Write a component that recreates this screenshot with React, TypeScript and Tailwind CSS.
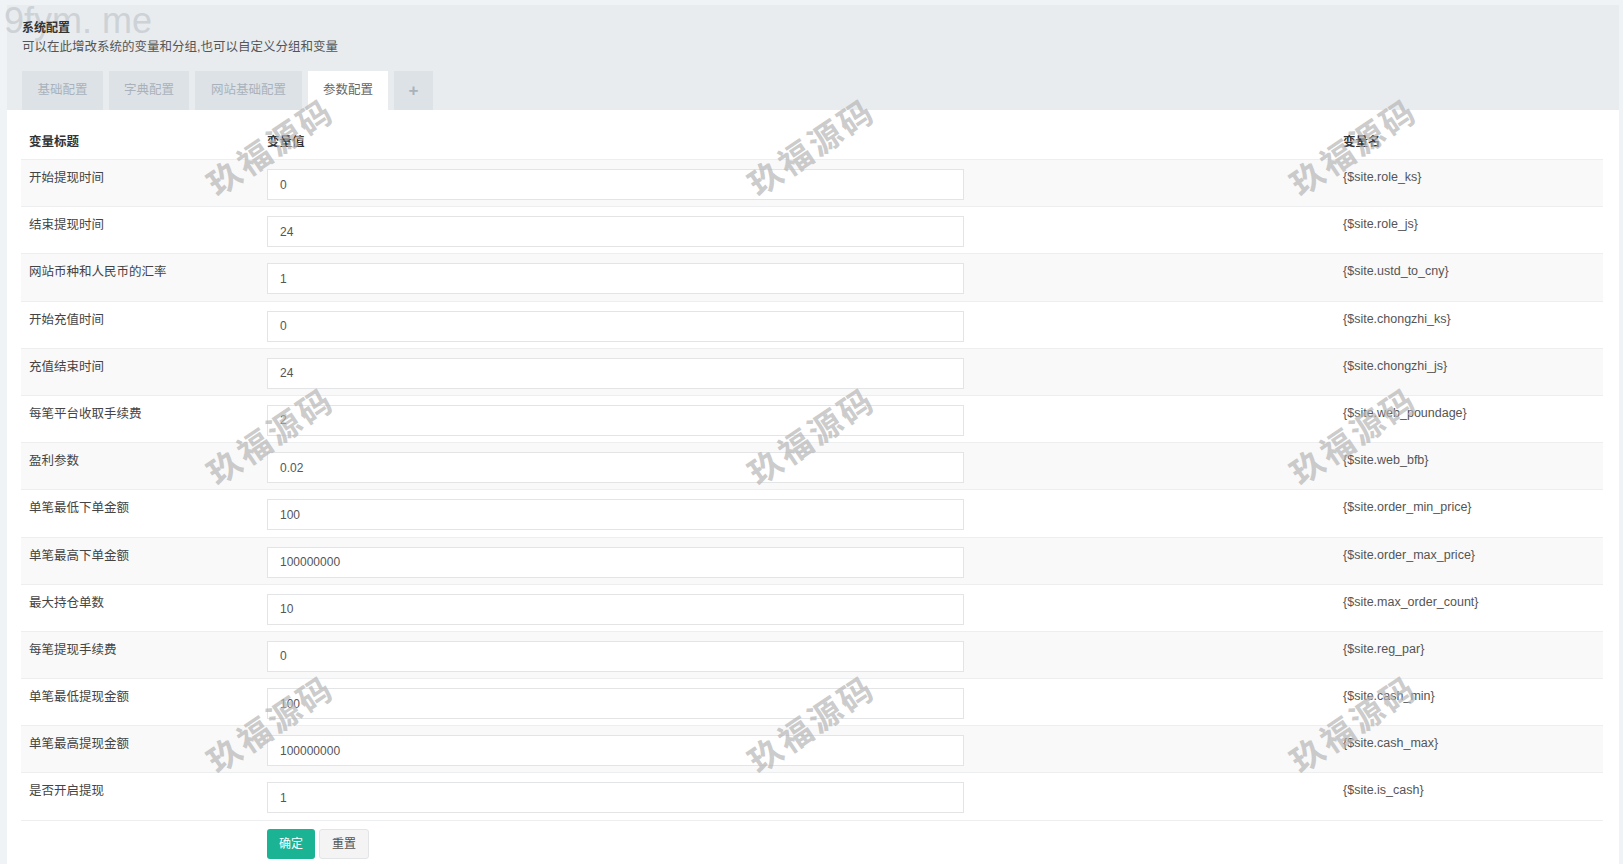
const rows = [
  { title: '开始提现时间', value: '0', name: '{$site.role_ks}' },
  { title: '结束提现时间', value: '24', name: '{$site.role_js}' },
  { title: '网站币种和人民币的汇率', value: '1', name: '{$site.ustd_to_cny}' },
  { title: '开始充值时间', value: '0', name: '{$site.chongzhi_ks}' },
  { title: '充值结束时间', value: '24', name: '{$site.chongzhi_js}' },
  { title: '每笔平台收取手续费', value: '2', name: '{$site.web_poundage}' },
  { title: '盈利参数', value: '0.02', name: '{$site.web_bfb}' },
  { title: '单笔最低下单金额', value: '100', name: '{$site.order_min_price}' },
  { title: '单笔最高下单金额', value: '100000000', name: '{$site.order_max_price}' },
  { title: '最大持仓单数', value: '10', name: '{$site.max_order_count}' },
  { title: '每笔提现手续费', value: '0', name: '{$site.reg_par}' },
  { title: '单笔最低提现金额', value: '100', name: '{$site.cash_min}' },
  { title: '单笔最高提现金额', value: '100000000', name: '{$site.cash_max}' },
  { title: '是否开启提现', value: '1', name: '{$site.is_cash}' },
];

const tabs = [
  { label: '基础配置', w: 'w-[81px]' },
  { label: '字典配置', w: 'w-[80px]' },
  { label: '网站基础配置', w: 'w-[107px]' },
  { label: '参数配置', w: 'w-[80px]' },
];

const marks = [
  { x: 271, y: 148 },
  { x: 812, y: 148 },
  { x: 1354, y: 148 },
  { x: 271, y: 437 },
  { x: 812, y: 437 },
  { x: 1354, y: 437 },
  { x: 271, y: 725 },
  { x: 812, y: 725 },
  { x: 1354, y: 725 },
];

const font = {
  fontFamily: '"Liberation Sans", "Noto Sans CJK SC", sans-serif',
};

export default function App() {
  return (
    <div className="relative h-[864px] overflow-hidden bg-[#f0f3f6] pt-[5px] pl-[7px] pr-[4px]" style={font}>
      {/* site watermark, sits under the header text */}
      <div className="pointer-events-none absolute left-[4px] top-[1px] text-[36px] leading-[40px] text-[#cdd2d7]">9fym. me</div>

      {/* header */}
      <div className="bg-[#e8ecef] pl-[15px] pt-[14px]">
        <div className="relative text-[12px] leading-[19px] font-semibold text-[#333]">系统配置</div>
        <div className="relative text-[12.5px] leading-[19px] text-[#555]">可以在此增改系统的变量和分组,也可以自定义分组和变量</div>
        <div className="mt-[14px] flex gap-[6px]">
          {tabs.map((t, i) => {
            const active = i === 3;
            return (
              <div
                key={t.label}
                className={
                  active
                    ? `h-[39px] ${t.w} flex items-center justify-center bg-white text-[12.5px] text-[#666]`
                    : `h-[39px] ${t.w} flex items-center justify-center bg-[#dde2e6] text-[12.5px] text-[#a9b2bc]`
                }
              >
                {t.label}
              </div>
            );
          })}
          <div className="h-[39px] w-[39px] flex items-center justify-center bg-[#dde2e6] text-[17px] font-bold text-[#a9b2bc]">+</div>
        </div>
      </div>

      {/* body */}
      <div className="bg-white pl-[14px] pr-[16px] pt-[15px] h-[760px]">
        <div className="flex h-[34px] items-center text-[12.5px] font-semibold text-[#333]">
          <div className="w-[238px] pl-[8px]">变量标题</div>
          <div className="w-[1077px] pl-[8px]">变量值</div>
          <div className="pl-[7px]">变量名</div>
        </div>
        {rows.map((r, i) => (
          <div
            key={r.name}
            className={`flex h-[47.2px] items-start border-t border-[#eceef0] ${i % 2 === 0 ? 'bg-[#f9f9f9]' : 'bg-white'}`}
          >
            <div className="w-[238px] pl-[8px] pt-[8px] text-[12.5px] leading-[20px] text-[#444]">{r.title}</div>
            <div className="w-[1077px] pl-[8px] pt-[9px]">
              <div className="flex h-[31px] w-[697px] items-center border border-[#e2e4e6] bg-white pl-[12px] text-[12px] text-[#555]">
                {r.value}
              </div>
            </div>
            <div className="pl-[7px] pt-[7px] text-[12.5px] leading-[20px] text-[#555]">{r.name}</div>
          </div>
        ))}
        <div className="flex border-t border-[#eceef0] pl-[246px] pt-[8px] gap-[4px]">
          <button className="h-[30px] w-[48px] rounded-[3px] bg-[#1ab394] text-[12px] text-white">确定</button>
          <button className="h-[30px] w-[50px] rounded-[3px] border border-[#e2e4e6] bg-[#f4f4f4] text-[12px] text-[#555]">重置</button>
        </div>
      </div>

      {/* watermarks */}
      {marks.map((m) => (
        <div
          key={`${m.x}-${m.y}`}
          className="pointer-events-none absolute -translate-x-1/2 -translate-y-1/2 -rotate-[34deg] whitespace-nowrap text-[33px] font-bold tracking-[3px] text-[#b5b5b5]/70"
          style={{ left: m.x, top: m.y }}
        >
          玖福源码
        </div>
      ))}
    </div>
  );
}
